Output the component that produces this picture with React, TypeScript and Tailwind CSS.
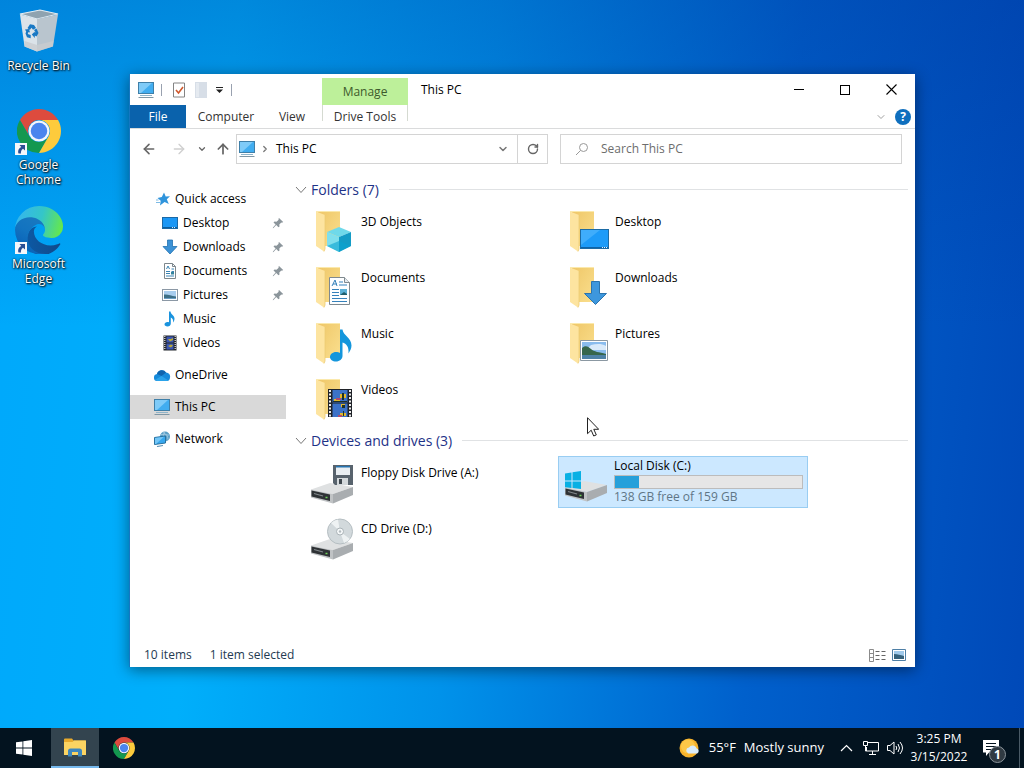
import React from "react";
import { ArrowLeft, ArrowRight, ArrowUp, ChevronDown, ChevronRight, RotateCw } from "lucide-react";

type IconProps = { className?: string };

/* ---------- Brand icons ---------- */

function ChromeIcon({ className }: IconProps) {
  return (
    <svg viewBox="0 0 48 48" className={className} aria-hidden="true">
      <path d="M24 12h20.78A24 24 0 0 0 3.22 12l10.39 18A12 12 0 0 1 24 12z" fill="#dd4b3e" />
      <path d="M34.39 30 24 48A24 24 0 0 1 3.21 12l10.4 18a12 12 0 0 0 20.78 0z" fill="#14984f" />
      <path d="M24 12a12 12 0 0 1 10.39 18L24 48A24 24 0 0 0 44.78 12z" fill="#fdcb3c" />
      <circle cx="24" cy="24" r="11.5" fill="#f4f6fb" />
      <circle cx="24" cy="24" r="9" fill="#4a85ee" />
    </svg>
  );
}

function EdgeIcon({ className }: IconProps) {
  return (
    <svg viewBox="0 0 256 256" className={className} aria-hidden="true">
      <defs>
        <linearGradient id="edge-low" x1="60" y1="180" x2="240" y2="180" gradientUnits="userSpaceOnUse">
          <stop offset="0" stopColor="#0c59a4" />
          <stop offset="1" stopColor="#114a8b" />
        </linearGradient>
        <linearGradient id="edge-mid" x1="140" y1="90" x2="50" y2="230" gradientUnits="userSpaceOnUse">
          <stop offset="0" stopColor="#1878c0" />
          <stop offset="0.5" stopColor="#1273c0" />
          <stop offset="1" stopColor="#0a63b8" />
        </linearGradient>
        <linearGradient id="edge-top" x1="20" y1="60" x2="250" y2="120" gradientUnits="userSpaceOnUse">
          <stop offset="0" stopColor="#35b8ea" />
          <stop offset="0.5" stopColor="#34c6c8" />
          <stop offset="1" stopColor="#66e84a" />
        </linearGradient>
      </defs>
      <path
        d="M235.68 199.46a93.73 93.73 0 0 1-10.54 4.71 101.87 101.87 0 0 1-35.9 6.46c-47.32 0-88.54-32.55-88.54-74.32a31.48 31.48 0 0 1 16.43-27.31c-42.8 1.8-53.8 46.4-53.8 72.53 0 73.88 68.09 81.37 82.76 81.37 7.91 0 19.84-2.3 27-4.56l1.31-.44a128.34 128.34 0 0 0 66.6-52.8 4 4 0 0 0-5.32-5.64z"
        fill="url(#edge-low)"
      />
      <path
        d="M105.73 241.42a79.2 79.2 0 0 1-22.74-21.34 80.72 80.72 0 0 1 29.53-120.13c3.12-1.47 8.45-4.13 15.54-4a32.35 32.35 0 0 1 25.69 13 31.88 31.88 0 0 1 6.36 18.66c0-.21 24.46-79.6-80-79.6-43.9 0-80 41.66-80 78.21a130.15 130.15 0 0 0 12.11 56 128 128 0 0 0 156.38 67.11 75.55 75.55 0 0 1-62.78-8z"
        fill="url(#edge-mid)"
      />
      <path
        d="M152.33 148.86c-.81 1.05-3.3 2.5-3.3 5.66 0 2.61 1.7 5.12 4.72 7.23 14.38 10 41.49 8.68 41.56 8.68a59.56 59.56 0 0 0 30.27-8.35A61.38 61.38 0 0 0 256 109.2c.26-22.41-8-37.31-11.34-43.91C223.46 23.84 177.72 0 128 0A128 128 0 0 0 0 126.2c.48-36.54 36.8-66.05 80-66.05 3.5 0 23.46.34 42 10.07 16.34 8.58 24.9 18.94 30.85 29.21 6.18 10.67 7.28 24.15 7.28 29.52s-2.74 13.33-7.8 19.91z"
        fill="url(#edge-top)"
      />
    </svg>
  );
}

function RecycleBinIcon({ className }: IconProps) {
  return (
    <svg viewBox="0 0 48 48" className={className} aria-hidden="true">
      <path d="M5 6 25 2l18 4-21 5z" fill="#8fa3b0" stroke="#e6edf2" strokeWidth="1.2" />
      <path d="M5 6.500 22 11v32.500L9.500 38.500z" fill="#dbe3e9" />
      <path d="M43 6.500 22 11v32.500l16-5z" fill="#b9c5ce" />
      <path d="M9.500 33 22 37v6.500l-12.500-5zM22 37l16.500-4-.8 5.500L22 43.500z" fill="#c9ccd0" opacity=".8" />
      <g fill="#1878c4">
        <path d="m12.500 20 2.500-3.800 4 .8 2 3-3 1.800-1.500-2-1.700 2.200z" />
        <path d="m21.500 20.500 2 4.500-2 3.500-1.700-1v2.500l-3-3.500 3-3v1.800l.6-1.200-1.400-2z" />
        <path d="m10 21.500 4-.5 1 3.500-1.500-.4-.8 2 3 .9v3.200l-3.700-1-1.500-3.700.7-2z" />
      </g>
    </svg>
  );
}

function ShortcutArrow() {
  return (
    <svg viewBox="0 0 12 12" className="absolute bottom-0 left-0 size-3" aria-hidden="true">
      <rect width="12" height="12" fill="#f5f7fa" />
      <path d="M4.500 2h5.500v5.500L8 5.700C6.200 7 5.700 8.500 6 10.500H3.500C2.500 7.500 4 5 6.300 3.900z" fill="#2a4f94" />
    </svg>
  );
}

/* ---------- Small (16px) icons ---------- */

function PcIcon({ className = "h-4 w-[18px]" }: IconProps) {
  return (
    <svg viewBox="0 0 18 16" className={className} aria-hidden="true">
      <rect x="1.500" y=".5" width="15" height="11" fill="#41adf0" stroke="#3f7fa8" />
      <path d="M2 1h13L4 11H2z" fill="#7fcbf8" />
      <path d="M3 13.500h12" stroke="#8fb4c9" />
      <path d="M1.500 15.500h15" stroke="#7f97a5" />
    </svg>
  );
}

function StarIcon() {
  return (
    <svg viewBox="0 0 16 16" className="size-4" aria-hidden="true">
      <path d="m9 1.500 1.700 4 4.300-.3-3.200 3 2 4.800-4.200-2L5 14.500l.7-4.700L2.500 7l4.300-.9z" fill="#2f94dc" />
      <path d="M1 11.500h4M1 9h2.500" stroke="#7dbbe6" />
    </svg>
  );
}

function DesktopIcon() {
  return (
    <svg viewBox="0 0 16 16" className="size-4" aria-hidden="true">
      <rect x=".5" y="2.500" width="15" height="11" fill="#1b97f5" stroke="#1b69a6" />
      <path d="M1 12.500h14" stroke="#0b5d9c" />
      <path d="M10 12.500h4" stroke="#d6ecff" strokeDasharray="1 1" />
    </svg>
  );
}

function DownArrowIcon() {
  return (
    <svg viewBox="0 0 16 16" className="size-4" aria-hidden="true">
      <path d="M5.500 1h5v6.500H15L8 15 1 7.500h4.500z" fill="#3c92d6" stroke="#2272b0" strokeWidth=".8" />
    </svg>
  );
}

function DocumentIcon() {
  return (
    <svg viewBox="0 0 16 16" className="size-4" aria-hidden="true">
      <path d="M2.500.5h8l3 3v12h-11z" fill="#fff" stroke="#7d878d" />
      <path d="M10.500.5v3h3" fill="none" stroke="#7d878d" />
      <path d="m4.500 6 1.500-3 1.500 3M4 8.500h4M4 10.500h4M4 13h8M9.500 6H12M9.500 8.500H12" fill="none" stroke="#3a84b4" />
      <rect x="9" y="9" width="3" height="2.500" fill="#34849e" />
    </svg>
  );
}

function PictureIcon() {
  return (
    <svg viewBox="0 0 16 16" className="size-4" aria-hidden="true">
      <rect x=".5" y="2.500" width="15" height="11" fill="#fff" stroke="#8b98a5" />
      <path d="M2 4h12v8H2z" fill="#a8cdee" />
      <path d="M2 7.500c4-.5 7 1.500 12 2V12H2z" fill="#3d6f86" />
      <path d="M2 11h12v1H2z" fill="#6b9dc4" />
    </svg>
  );
}

function MusicIcon() {
  return (
    <svg viewBox="0 0 16 16" className="size-4" aria-hidden="true">
      <path d="M7 .5h1.500c.3 3 4 4 4 7 0 1.700-.6 3-1.500 4 .6-3-.6-4.200-2.200-5v6c0 1.800-1.500 3-3.300 3S2.500 14.600 2.500 13.300s1.300-2.400 3-2.400c.6 0 1 .1 1.500.3z" fill="#1a93de" />
    </svg>
  );
}

function FilmIcon() {
  return (
    <svg viewBox="0 0 16 16" className="size-4" aria-hidden="true">
      <path d="M1.500.5h13v15h-13z" fill="#23262c" />
      <path d="M2.800 1v14M13.200 1v14" stroke="#e8e8e8" strokeWidth="1.200" strokeDasharray="1 1" />
      <path d="M4.500 1.500h7v6h-7zM4.500 8.500h7v6h-7z" fill="#3b56b0" />
      <path d="M6 4h3l2-1v2L8 6.500zM6 11l3-1.500 2 1-2 2z" fill="#b7a93a" />
    </svg>
  );
}

function CloudIcon() {
  return (
    <svg viewBox="0 0 18 16" className="h-4 w-[18px]" aria-hidden="true">
      <path d="M1 10.500A3.500 3.500 0 0 1 4 7a5 5 0 0 1 9-1.500 4 4 0 0 1 4 5C17 13 15.500 14 14 14H4a3.300 3.300 0 0 1-3-3.500z" fill="#168ada" />
      <path d="M4 7a5 5 0 0 1 9-1.500L8.500 9 4 7z" fill="#0f64ae" />
      <path d="M2 12.800 8.500 9l7 4.500L14 14H4z" fill="#2aa3ea" />
    </svg>
  );
}

function NetworkIcon() {
  return (
    <svg viewBox="0 0 18 16" className="h-4 w-[18px]" aria-hidden="true">
      <circle cx="12" cy="5.500" r="5" fill="#5a9fc6" />
      <path d="M12 .5c-2 3-2 7 0 10M7.500 3.500 16 4M10 1.500q5 2 5 7" fill="none" stroke="#a9cde2" strokeWidth=".8" />
      <path d="m1.500 6.500 11-1.500v7l-11 1.500z" fill="#37a7ee" stroke="#28719f" />
      <path d="m2 7 9-1.200L3 13H2z" fill="#73c6f7" />
      <path d="m4 15.500 6-1" stroke="#5c92b4" strokeWidth="1.200" />
    </svg>
  );
}

function PinIcon() {
  return (
    <svg viewBox="0 0 12 12" className="size-3" aria-hidden="true">
      <path d="m7 1 4.200 4-1.200.8-.7-.3-2 2 .2 2-1 .8L4.200 8 1.500 11l-.7.200.2-.8L3.600 7.500 1.500 5.500l1-1 2 .2 2.200-2-.3-.8z" fill="#8b959b" />
    </svg>
  );
}

/* ---------- Large tile icons ---------- */

function FolderIcon({ children }: { children: React.ReactNode }) {
  return (
    <svg viewBox="0 0 48 48" className="size-12 shrink-0" aria-hidden="true">
      <defs>
        <linearGradient id="folder-back" x1="0" y1="0" x2="1" y2="1">
          <stop offset="0" stopColor="#efc768" />
          <stop offset="1" stopColor="#fadf8e" />
        </linearGradient>
      </defs>
      <path d="M10 2.500h22V37H10z" fill="url(#folder-back)" />
      <path d="M8 2.500 17 6v34l-1 2.500L8 37z" fill="#fde4a0" />
      <path d="M17 6v34l-1 2.500" fill="none" stroke="#eccb75" strokeWidth=".8" />
      <path d="M8 2.500h24" fill="none" stroke="#fbe9ac" />
      {children}
    </svg>
  );
}

const overlays = {
  cube: (
    <>
      <path d="m31 18 12 5-12 5-12-5z" fill="#6fd9ea" />
      <path d="m19 23 12 5v15l-12-6z" fill="#7fdfed" />
      <path d="m43 23-12 5v15l12-6z" fill="#149cc6" />
      <path d="m19 37 12-5 12 5-12 6z" fill="#0aa3d0" opacity=".6" />
    </>
  ),
  desktop: (
    <>
      <rect x="18.500" y="20.500" width="28" height="19" fill="#1d9bf8" stroke="#1c6ba5" />
      <path d="M19 21h19L19 36z" fill="#3fadfb" />
      <path d="M19 38.500h27" stroke="#0e63a8" />
      <path d="M40 38.500h5" stroke="#e5f3ff" strokeDasharray="1 1" />
    </>
  ),
  document: (
    <>
      <path d="M21.500 12.500h15l5 5v22h-20z" fill="#fdfeff" stroke="#7f898f" />
      <path d="M36.500 12.500v5h5" fill="#e4eaee" stroke="#7f898f" />
      <path d="m24 21 3-6 2 6M25 19h4M31 17h4M31 20h8M24 24.500h7M24 27.500h7M24 30.500h7M24 33.500h15M24 36.500h15" fill="none" stroke="#3581bb" />
      <path d="M32 24h7v6h-7z" fill="#5bb0d6" />
      <path d="m32 30 4-3 3 2v1z" fill="#1e5d6b" />
    </>
  ),
  download: <path d="M29.500 16.500h8v12h7L33.500 39.500l-11-11h7z" fill="#3d97dd" stroke="#2b74ae" />,
  music: (
    <path
      d="M32 8.500h2.500c.5 6 9 8 9 16 0 3-1.500 5.500-3 8 .5-7-2-9.500-6-11v13.500c0 3-3 5.500-6.500 5.500S22 38.500 22 36s2.500-5 6-5c1.500 0 3 .3 4 1z"
      fill="#1496dc"
    />
  ),
  picture: (
    <>
      <path d="M18.500 19.500h27v20h-27z" fill="#fff" stroke="#8b98a2" />
      <path d="M20 21h24v17H20z" fill="#8abced" />
      <path d="M29 24c5-1 10-2 15 1v4H24z" fill="#d9eafa" />
      <path d="M20 27c3-3 6-2 9 1s8 3 15 5v2H20z" fill="#37674c" />
      <path d="M20 34h24v4H20z" fill="#4e82a6" />
    </>
  ),
  film: (
    <>
      <path d="M20 12h24v28H20z" fill="#1f2228" />
      <path d="M22 13v27M42 13v27" stroke="#ececec" strokeWidth="2" strokeDasharray="2 1.500" />
      <path d="M24.500 13h15v12.500h-15zM24.500 26.500h15V40h-15z" fill="#3c72c8" />
      <path d="M32 17h6v4h-6zM26 22h6v3h-6zM33 27h4v3h-4zM32 36h6v3h-6z" fill="#e0b62b" />
      <path d="M28 21h5v2h-5zM30 38h4v2h-4z" fill="#b04a6f" />
      <path d="M34 16h2v7h-2zM34 28h3v3h-3zM35 34h1v5h-1zM25 24h14v1H25z" fill="#1d3027" />
    </>
  ),
};

function DriveIcon({ children }: { children: React.ReactNode }) {
  return (
    <svg viewBox="0 0 48 48" className="size-12 shrink-0" aria-hidden="true">
      <path d="M3 29.500 22 23l23 4-20 7z" fill="#dfe1e2" />
      <path d="m3 29.500 22 4.500v9.500L3 37.500z" fill="#c0c3c5" />
      <path d="M25 34 45 27v8l-20 8.500z" fill="#a9adb0" />
      <path d="M3.500 30.500 22 34.500v6.500L3.500 36.500z" fill="#2e3235" />
      <path d="M6 33.500 15 36" stroke="#83898c" strokeWidth="1.200" />
      <path d="M17.500 37.500h2" stroke="#70d25b" strokeWidth="1.500" />
      {children}
    </svg>
  );
}

const media = {
  floppy: (
    <>
      <path d="M25 5h20v20H27l-2-2z" fill="#58636d" />
      <path d="M28 6h14v9H28z" fill="#e9eef2" />
      <path d="M28 6h14v1.500H28z" fill="#2774b0" />
      <path d="M29 18h11v7H29z" fill="#d4d9dc" />
      <path d="M31 19h3v5h-3z" fill="#3d464d" />
    </>
  ),
  disc: (
    <>
      <circle cx="32" cy="15.500" r="12.500" fill="#d2d9dc" stroke="#b5bec2" />
      <path d="m32 15.500-9-8.500a12 12 0 0 1 7-3.500zM32 15.500l10 7.500a12 12 0 0 1-6 4z" fill="#eef2f3" />
      <circle cx="32" cy="15.500" r="3.500" fill="#f5f8f9" stroke="#aab3b7" />
      <circle cx="32" cy="15.500" r="1.200" fill="#b3bbbf" />
    </>
  ),
  windows: <path d="m3 15.500 6.500-1v8H3zm7.500-1.200 8.500-1.300v9.500h-8.500zM3 23.500h6.500v6.500L3 29.200zm7.500 0H19V31l-8.500-1z" fill="#08b0e4" />,
};

/* ---------- Data ---------- */

const quickLinks = [
  { label: "Desktop", icon: <DesktopIcon />, pinned: true },
  { label: "Downloads", icon: <DownArrowIcon />, pinned: true },
  { label: "Documents", icon: <DocumentIcon />, pinned: true },
  { label: "Pictures", icon: <PictureIcon />, pinned: true },
  { label: "Music", icon: <MusicIcon />, pinned: false },
  { label: "Videos", icon: <FilmIcon />, pinned: false },
];

const folders = [
  { label: "3D Objects", art: overlays.cube },
  { label: "Desktop", art: overlays.desktop },
  { label: "Documents", art: overlays.document },
  { label: "Downloads", art: overlays.download },
  { label: "Music", art: overlays.music },
  { label: "Pictures", art: overlays.picture },
  { label: "Videos", art: overlays.film },
];

const shortcuts = [
  { label: "Recycle Bin", icon: <RecycleBinIcon className="size-12" />, linked: false },
  { label: "Google Chrome", icon: <ChromeIcon className="size-11" />, linked: true },
  { label: "Microsoft Edge", icon: <EdgeIcon className="size-12" />, linked: true },
];

/* ---------- Window parts ---------- */

function TitleBar() {
  return (
    <header className="flex h-[31px] items-stretch">
      <div className="flex w-[192px] items-center pl-[7px]">
        <PcIcon />
        <span className="ml-1.5 h-3 w-px bg-gray-400" />
        <button type="button" aria-label="Properties" className="ml-2.5">
          <svg viewBox="0 0 14 16" className="h-4 w-3.5">
            <path d="M1.500 1h11v14h-11z" fill="#fff" stroke="#848484" />
            <path d="m4 8 2.500 3L11 5" fill="none" stroke="#d0582c" strokeWidth="1.600" />
          </svg>
        </button>
        <button type="button" aria-label="New folder" className="ml-2">
          <svg viewBox="0 0 14 16" className="h-4 w-3.5">
            <path d="M1 0h12v16H1z" fill="#d7dee7" />
            <path d="M2 1h3v14H2z" fill="#e5eaf0" />
          </svg>
        </button>
        <button type="button" aria-label="Customize toolbar" className="ml-[7px]">
          <svg viewBox="0 0 9 9" className="size-[9px]">
            <path d="M1 2h7v1H1zM1 4.500h7L4.500 8z" fill="#222" />
          </svg>
        </button>
        <span className="ml-[7px] h-3 w-px bg-gray-400" />
      </div>
      <div className="mt-1 flex w-[86px] items-center justify-center bg-[#bdf09a] text-[#3d5a2c]">Manage</div>
      <h1 className="flex flex-1 items-center pl-[13px]">This PC</h1>
      <div className="flex pr-px">
        <button type="button" aria-label="Minimize" className="flex w-[46px] items-center justify-center">
          <span className="h-px w-2.5 bg-black" />
        </button>
        <button type="button" aria-label="Maximize" className="flex w-[46px] items-center justify-center">
          <span className="size-2.5 border border-black" />
        </button>
        <button type="button" aria-label="Close" className="flex w-[46px] items-center justify-center">
          <svg viewBox="0 0 11 11" className="size-[11px]">
            <path d="m.5.5 10 10M10.500.5l-10 10" stroke="#000" strokeWidth="1.100" />
          </svg>
        </button>
      </div>
    </header>
  );
}

function RibbonTabs() {
  return (
    <div className="flex h-6 items-stretch border-b border-[#dadbdc] text-[#333]">
      <button type="button" className="w-14 bg-[#0a62ac] text-white">File</button>
      <button type="button" className="w-20">Computer</button>
      <button type="button" className="mr-1 w-[52px]">View</button>
      <button type="button" className="flex w-[86px] items-center justify-between">
        <span className="h-4 w-px self-start bg-[#d5dad1]" />
        Drive Tools
        <span className="h-4 w-px self-start bg-[#d5dad1]" />
      </button>
      <div className="ml-auto flex items-center gap-2 pr-1">
        <button type="button" aria-label="Expand the ribbon">
          <ChevronDown size={12} className="text-[#a0a0a0]" />
        </button>
        <button type="button" aria-label="Help" className="flex size-4 items-center justify-center rounded-full bg-[#0f6fbe] text-[12px] font-bold text-white">
          ?
        </button>
      </div>
    </div>
  );
}

function NavBar() {
  return (
    <nav className="flex h-10 items-center pr-[13px]">
      <div className="flex w-[106px] shrink-0 items-center text-[#666]">
        <button type="button" aria-label="Back" className="ml-[11px]">
          <ArrowLeft size={16} strokeWidth={2.4} />
        </button>
        <button type="button" aria-label="Forward" className="ml-3.5 text-[#cfcfcf]">
          <ArrowRight size={16} />
        </button>
        <button type="button" aria-label="Recent locations" className="ml-2.5">
          <ChevronDown size={10} strokeWidth={3} />
        </button>
        <button type="button" aria-label="Up" className="ml-2">
          <ArrowUp size={16} strokeWidth={2.6} />
        </button>
      </div>
      <div className="grid flex-1 grid-cols-[312fr_342fr] gap-3">
        <div className="flex h-[30px] items-center border border-[#d4d4d4]">
          <PcIcon className="ml-px h-4 w-[18px]" />
          <ChevronRight size={10} strokeWidth={3} className="ml-1 text-[#777]" />
          <a href="#this-pc" className="ml-1.5 flex-1">This PC</a>
          <button type="button" aria-label="Previous locations" className="mr-2">
            <ChevronDown size={12} strokeWidth={3} className="text-[#777]" />
          </button>
          <button type="button" aria-label="Refresh" className="flex w-[30px] items-center justify-center self-stretch border-l border-[#d4d4d4]">
            <RotateCw size={12} strokeWidth={2.8} className="text-[#666]" />
          </button>
        </div>
        <label htmlFor="search" className="flex h-[30px] items-center border border-[#d4d4d4] pl-3.5">
          <svg viewBox="0 0 14 14" className="mr-3 size-3.5 shrink-0" aria-hidden="true">
            <circle cx="8.500" cy="5.500" r="4" fill="none" stroke="#999" />
            <path d="M5.500 8.500 1 13" stroke="#999" />
          </svg>
          <input
            id="search"
            type="search"
            aria-label="Search This PC"
            placeholder="Search This PC"
            className="w-full min-w-0 outline-none placeholder:text-[#6d6d6d]"
          />
        </label>
      </div>
    </nav>
  );
}

function Sidebar() {
  return (
    <aside className="w-[156px] shrink-0 pt-[18px]">
      <a href="#quick" className="flex h-6 items-center gap-1 pl-[25px]"><StarIcon /> Quick access</a>
      <ul>
        {quickLinks.map((link) => (
          <li key={link.label}>
            <a href={"#" + link.label} className="flex h-6 items-center gap-[5px] pl-8">
              {link.icon}
              <span className="flex-1">{link.label}</span>
              {link.pinned && <span className="pr-0.5"><PinIcon /></span>}
            </a>
          </li>
        ))}
      </ul>
      <a href="#onedrive" className="mt-2 flex h-6 items-center gap-1 pl-[23px]"><CloudIcon /> OneDrive</a>
      <a href="#this-pc" className="mt-2 flex h-6 items-center gap-1 bg-[#d9d9d9] pl-[23px]"><PcIcon /> This PC</a>
      <a href="#network" className="mt-2 flex h-6 items-center gap-1 pl-[23px]"><NetworkIcon /> Network</a>
    </aside>
  );
}

function GroupHeader({ title }: { title: string }) {
  return (
    <div className="flex h-[31px] items-center pr-[7px]">
      <button type="button" className="flex items-center gap-1 text-[14px] text-[#1e3287]">
        <svg viewBox="0 0 12 8" className="h-2 w-3" aria-hidden="true">
          <path d="m1 1 5 5.500L11 1" fill="none" stroke="#777" />
        </svg>
        {title}
      </button>
      <span className="ml-2.5 h-px flex-1 bg-[#e0e2e4]" />
    </div>
  );
}

function Tile({ label, icon }: { label: string; icon: React.ReactNode }) {
  return (
    <li className="flex h-[52px] items-start gap-[5px] pt-1 pl-1">
      {icon}
      <span className="pt-1 leading-[18px]">{label}</span>
    </li>
  );
}

function ExplorerWindow() {
  const usedPercent = 13;
  return (
    <section
      aria-label="This PC"
      className="absolute top-[74px] right-[109px] bottom-[61px] left-[129px] flex flex-col border-l border-[#1577c2] bg-white text-[12px] shadow-[0_3px_14px_rgba(0,0,0,0.45)]"
    >
      <TitleBar />
      <RibbonTabs />
      <NavBar />
      <div className="flex min-h-0 flex-1">
        <Sidebar />
        <main className="flex-1 pt-[5px] pl-[9px]">
          <GroupHeader title="Folders (7)" />
          <ul className="grid grid-cols-[repeat(auto-fill,250px)] gap-1 pl-[9px]">
            {folders.map((folder) => (
              <Tile key={folder.label} label={folder.label} icon={<FolderIcon>{folder.art}</FolderIcon>} />
            ))}
          </ul>
          <GroupHeader title="Devices and drives (3)" />
          <ul className="grid grid-cols-[repeat(auto-fill,250px)] gap-1 pl-[9px]">
            <Tile label="Floppy Disk Drive (A:)" icon={<DriveIcon>{media.floppy}</DriveIcon>} />
            <li className="flex h-[52px] items-start gap-1 border border-[#99cdf2] bg-[#cce8ff] pt-px pl-[3px]">
              <DriveIcon>{media.windows}</DriveIcon>
              <div className="flex-1 pr-1">
                <p id="disk-c" className="leading-4">Local Disk (C:)</p>
                <div
                  role="progressbar"
                  aria-labelledby="disk-c"
                  aria-valuenow={usedPercent}
                  className="mt-px h-3.5 border border-[#bcbcbc] bg-[#e6e6e6]"
                >
                  <div className="h-full bg-[#26a0da]" style={{ width: `${usedPercent}%` }} />
                </div>
                <p className="leading-4 text-[#5f7686]">138 GB free of 159 GB</p>
              </div>
            </li>
            <Tile label="CD Drive (D:)" icon={<DriveIcon>{media.disc}</DriveIcon>} />
          </ul>
        </main>
      </div>
      <footer className="flex h-6 items-center gap-[18px] pr-[9px] pl-3.5 text-[#243a52]">
        <span>10 items</span>
        <span>1 item selected</span>
        <div className="ml-auto flex items-center gap-1.5">
          <button type="button" aria-label="Details view">
            <svg viewBox="0 0 17 13" className="h-[13px] w-[17px]">
              <path d="M.5.5h4v12h-4zM.5 4.500h4M.5 8.500h4" fill="none" stroke="#8b8b8b" />
              <path d="M6.500 2.500H17M6.500 6.500H17M6.500 10.500H17" stroke="#666" strokeDasharray="4 2" />
            </svg>
          </button>
          <button type="button" aria-label="Large icons view">
            <svg viewBox="0 0 14 12" className="h-3 w-3.5">
              <path d="M.5.5h13v11H.5z" fill="#fff" stroke="#4e7fa6" />
              <path d="M2 2h10v8H2z" fill="#9fc9ea" />
              <path d="M2 5c4 0 6 1 10 2v3H2z" fill="#35617b" />
            </svg>
          </button>
        </div>
      </footer>
    </section>
  );
}

/* ---------- Taskbar ---------- */

function Taskbar() {
  return (
    <footer className="flex h-10 items-stretch bg-[#03131f] text-white">
      <button type="button" aria-label="Start" className="mr-[3px] flex w-12 items-center justify-center">
        <svg viewBox="0 0 16 16" className="size-4">
          <path d="m0 2.300 6.500-.9v6.200H0zM7.300 1.300 16 0v7.600H7.300zM0 8.400h6.500v6.200L0 13.700zm7.300 0H16V16l-8.700-1.200z" fill="#fff" />
        </svg>
      </button>
      <button type="button" aria-label="File Explorer" className="flex w-12 items-center justify-center border-b-2 border-[#76b9ed] bg-[#33444f]">
        <svg viewBox="0 0 22 19" className="mt-px h-[19px] w-[22px]">
          <path d="M0 1.500Q0 .5 1 .5h7l1.500 2H21q1 0 1 1V17H0z" fill="#e9aa2c" />
          <path d="M0 4h8.500L10 2.500h12V17H0z" fill="#fcd462" />
          <path d="M4 18.500V13q0-2.500 2.500-2.500h9Q18 10.500 18 13v5.500h-4V14H8v4.500z" fill="#3f87bd" />
        </svg>
      </button>
      <button type="button" aria-label="Google Chrome" className="ml-px flex w-12 items-center justify-center">
        <ChromeIcon className="size-[22px]" />
      </button>
      <div className="ml-auto flex items-center">
        <button type="button" className="flex items-center gap-2 text-[13px]">
          <svg viewBox="0 0 22 20" className="h-5 w-[22px]" aria-hidden="true">
            <circle cx="10" cy="10" r="9.500" fill="#f7b32c" />
            <circle cx="9" cy="8.500" r="7" fill="#fdc748" />
            <path d="M9.500 15.500A3 3 0 0 1 10 9.600a4.200 4.200 0 0 1 7.700 1 2.600 2.600 0 0 1 .5 4.900z" fill="#d9ecfb" />
          </svg>
          <span>55°F</span>
          <span>Mostly sunny</span>
        </button>
        <button type="button" aria-label="Show hidden icons" className="ml-4">
          <svg viewBox="0 0 13 8" className="h-2 w-[13px]">
            <path d="M1 7 6.500 1.500 12 7" fill="none" stroke="#fff" strokeWidth="1.200" />
          </svg>
        </button>
        <button type="button" aria-label="Network" className="ml-2.5">
          <svg viewBox="0 0 16 14" className="h-3.5 w-4">
            <path d="M5 1.500h10.500v8.500H3.500V6M9.500 10v3M6 13.500h7M.5.500h4v4h-4zM2.500 4.500V10h1" fill="none" stroke="#fff" />
          </svg>
        </button>
        <button type="button" aria-label="Volume" className="ml-2">
          <svg viewBox="0 0 17 14" className="h-3.5 w-[17px]">
            <path d="M.5 4.500H3L7 1v12L3 9.500H.5z" fill="none" stroke="#fff" />
            <path d="M9 5q1.500 2 0 4M11 3q3 4 0 8M13 1q5 6 0 12" fill="none" stroke="#fff" />
          </svg>
        </button>
        <time dateTime="2022-03-15T15:25" className="ml-[7px] flex w-[56px] flex-col items-center text-[12px] leading-[18px] whitespace-nowrap">
          <span>3:25 PM</span>
          <span>3/15/2022</span>
        </time>
        <button type="button" aria-label="1 new notification" className="relative mr-3 ml-4 h-6 w-6">
          <svg viewBox="0 0 16 16" className="absolute top-1 left-0 size-4">
            <path d="M0 0h16v12.500H6L3 16v-3.500H0z" fill="#fff" />
            <path d="M3 3.500h10M3 6.500h10M3 9.500h6" stroke="#03131f" />
          </svg>
          <span className="absolute top-2.5 left-1.5 flex size-[17px] items-center justify-center rounded-full border border-[#8b949b] bg-[#303a42] text-[12px] font-bold">
            1
          </span>
        </button>
        <span className="mr-1 h-full w-px bg-[#4a5a66]" />
      </div>
    </footer>
  );
}

export default function App() {
  return (
    <div className="flex min-h-screen flex-col font-['Open_Sans','Noto_Sans',sans-serif] text-black">
      <div className="relative flex-1 overflow-hidden bg-[linear-gradient(to_bottom,rgba(0,50,150,0.3),rgba(0,90,200,0)_45%),linear-gradient(95deg,#00a8fb_0%,#00affb_22%,#0092ea_46%,#0060cc_74%,#0049b8_100%)]">
        <ul className="flex w-[77px] flex-col text-center text-[12px] leading-[15px] text-white">
          {shortcuts.map((item) => (
            <li key={item.label} className="h-[99px] pt-2">
              <button type="button" className="flex w-full flex-col items-center gap-0.5">
                <span className="relative flex size-12 items-center justify-center">
                  {item.icon}
                  {item.linked && <ShortcutArrow />}
                </span>
                <span className="[text-shadow:1px_1px_2px_#000,0_0_2px_#000]">{item.label}</span>
              </button>
            </li>
          ))}
        </ul>
        <ExplorerWindow />
        {/* Mouse pointer */}
        <svg viewBox="0 0 12 20" className="absolute top-[417px] left-[587px] h-5 w-3" aria-hidden="true">
          <path d="M.5.700v16l3.700-3.500L6.700 19l2.600-1.100-2.500-5.600h4.900z" fill="#fff" stroke="#222" />
        </svg>
      </div>
      <Taskbar />
    </div>
  );
}
